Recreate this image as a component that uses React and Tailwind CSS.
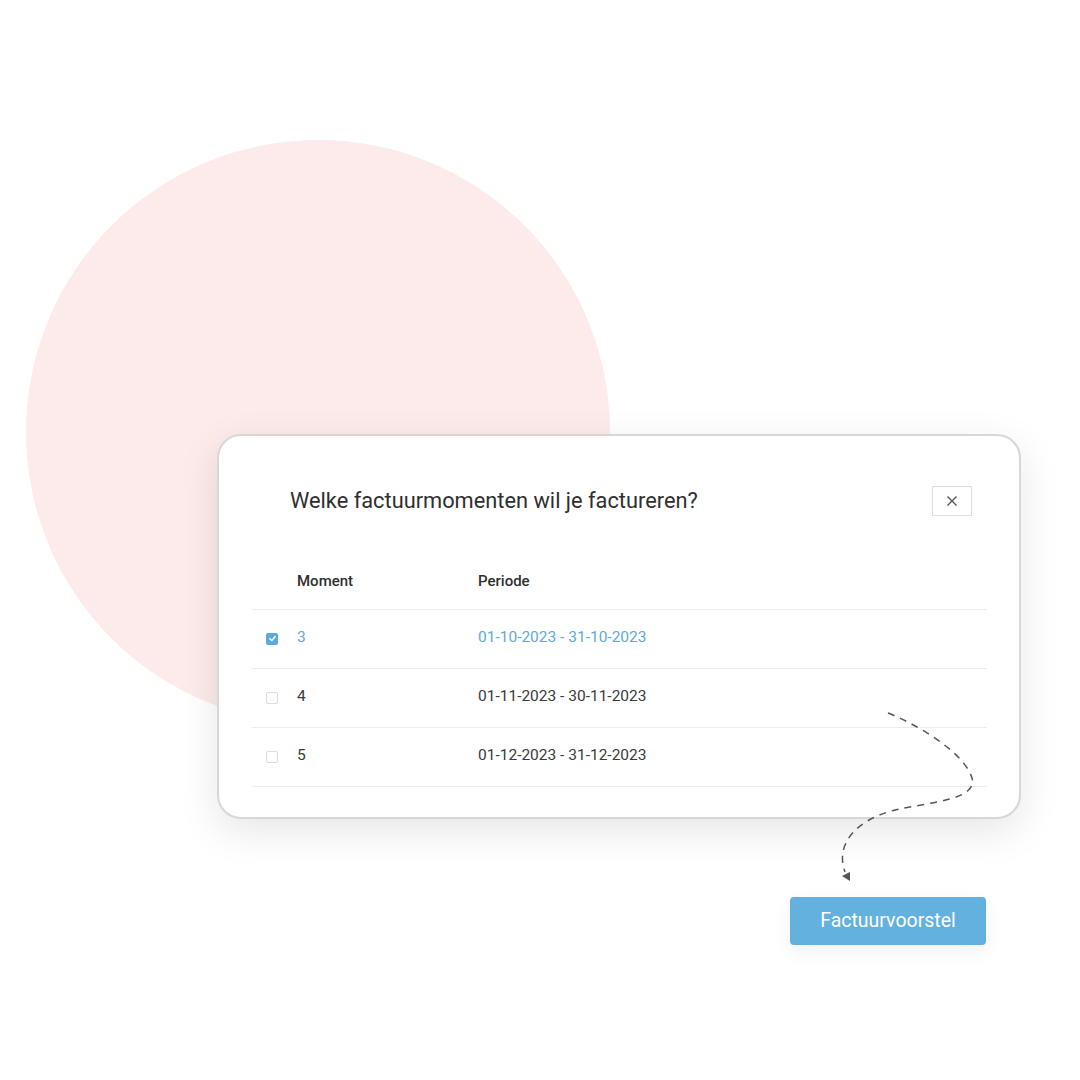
import React from 'react';

const rows = [
  { moment: '3', periode: '01-10-2023 - 31-10-2023', checked: true },
  { moment: '4', periode: '01-11-2023 - 30-11-2023', checked: false },
  { moment: '5', periode: '01-12-2023 - 31-12-2023', checked: false },
];

function Checkbox({ checked }) {
  if (checked) {
    return (
      <span className="flex h-[12px] w-[12px] items-center justify-center rounded-[2px] bg-[#5da9dd]">
        <svg width="9" height="9" viewBox="0 0 10 10" fill="none">
          <path d="M2 5.2 L4.2 7.3 L8 2.8" stroke="white" strokeWidth="1.6" strokeLinecap="round" strokeLinejoin="round" />
        </svg>
      </span>
    );
  }
  return <span className="block h-[12px] w-[12px] rounded-[2px] border border-[#dcdcdc] bg-white" />;
}

export default function App() {
  return (
    <div className="relative h-[1080px] w-[1080px] overflow-hidden bg-white font-['Roboto',sans-serif]">
      {/* decorative circle */}
      <div className="absolute left-[26px] top-[140px] h-[584px] w-[584px] rounded-full bg-[#fcebea]" />

      <div className="relative flex flex-col pt-[434px]">
        {/* dialog card */}
        <div className="ml-[217px] h-[385px] w-[804px] rounded-[24px] border-2 border-[#d7d7d7] bg-white shadow-[0_12px_40px_rgba(0,0,0,0.10)]">
          <div className="flex items-center justify-between pl-[71px] pr-[47px] pt-[50px]">
            <h1 className="text-[21.8px] font-normal leading-[30px] text-[#2f2f2f]">Welke factuurmomenten wil je factureren?</h1>
            <button className="flex h-[30px] w-[40px] items-center justify-center border border-[#dedede] bg-white">
              <svg width="12" height="12" viewBox="0 0 12 12">
                <path d="M1.5 1.5 L10.5 10.5 M10.5 1.5 L1.5 10.5" stroke="#555" strokeWidth="1.4" />
              </svg>
            </button>
          </div>

          <div className="ml-[33px] mr-[32px] mt-[35px]">
            <div className="flex h-[58px] items-center pt-[2px] text-[15px] font-medium text-[#2f2f2f]">
              <span className="w-[226px] pl-[45px]">Moment</span>
              <span>Periode</span>
            </div>
            {rows.map((r) => (
              <div
                key={r.moment}
                className={`flex h-[59px] items-center border-t border-[#ececec] pb-[3px] text-[15.5px] ${r.checked ? 'text-[#5ea9dc]' : 'text-[#3a3a3a]'}`}
              >
                <span className="w-[45px] pl-[14px] pt-[2px]">
                  <Checkbox checked={r.checked} />
                </span>
                <span className="w-[181px]">{r.moment}</span>
                <span>{r.periode}</span>
              </div>
            ))}
            <div className="border-t border-[#ececec]" />
          </div>
        </div>

        <button className="ml-[790px] mt-[78px] h-[48px] w-[196px] rounded-[4px] bg-[#63b1de] text-[19.5px] text-white shadow-[0_6px_20px_rgba(0,0,0,0.06)]">
          Factuurvoorstel
        </button>
      </div>

      {/* dashed arrow */}
      <svg className="pointer-events-none absolute left-0 top-0" width="1080" height="1080">
        <path
          d="M888 713 C 925 728, 965 755, 972 778 C 978 800, 930 802, 895 810 C 855 820, 835 845, 845 872"
          fill="none"
          stroke="#555"
          strokeWidth="1.5"
          strokeDasharray="7 6"
        />
        <path d="M842 876 L850 872 L850 881 Z" fill="#555" />
      </svg>
    </div>
  );
}
